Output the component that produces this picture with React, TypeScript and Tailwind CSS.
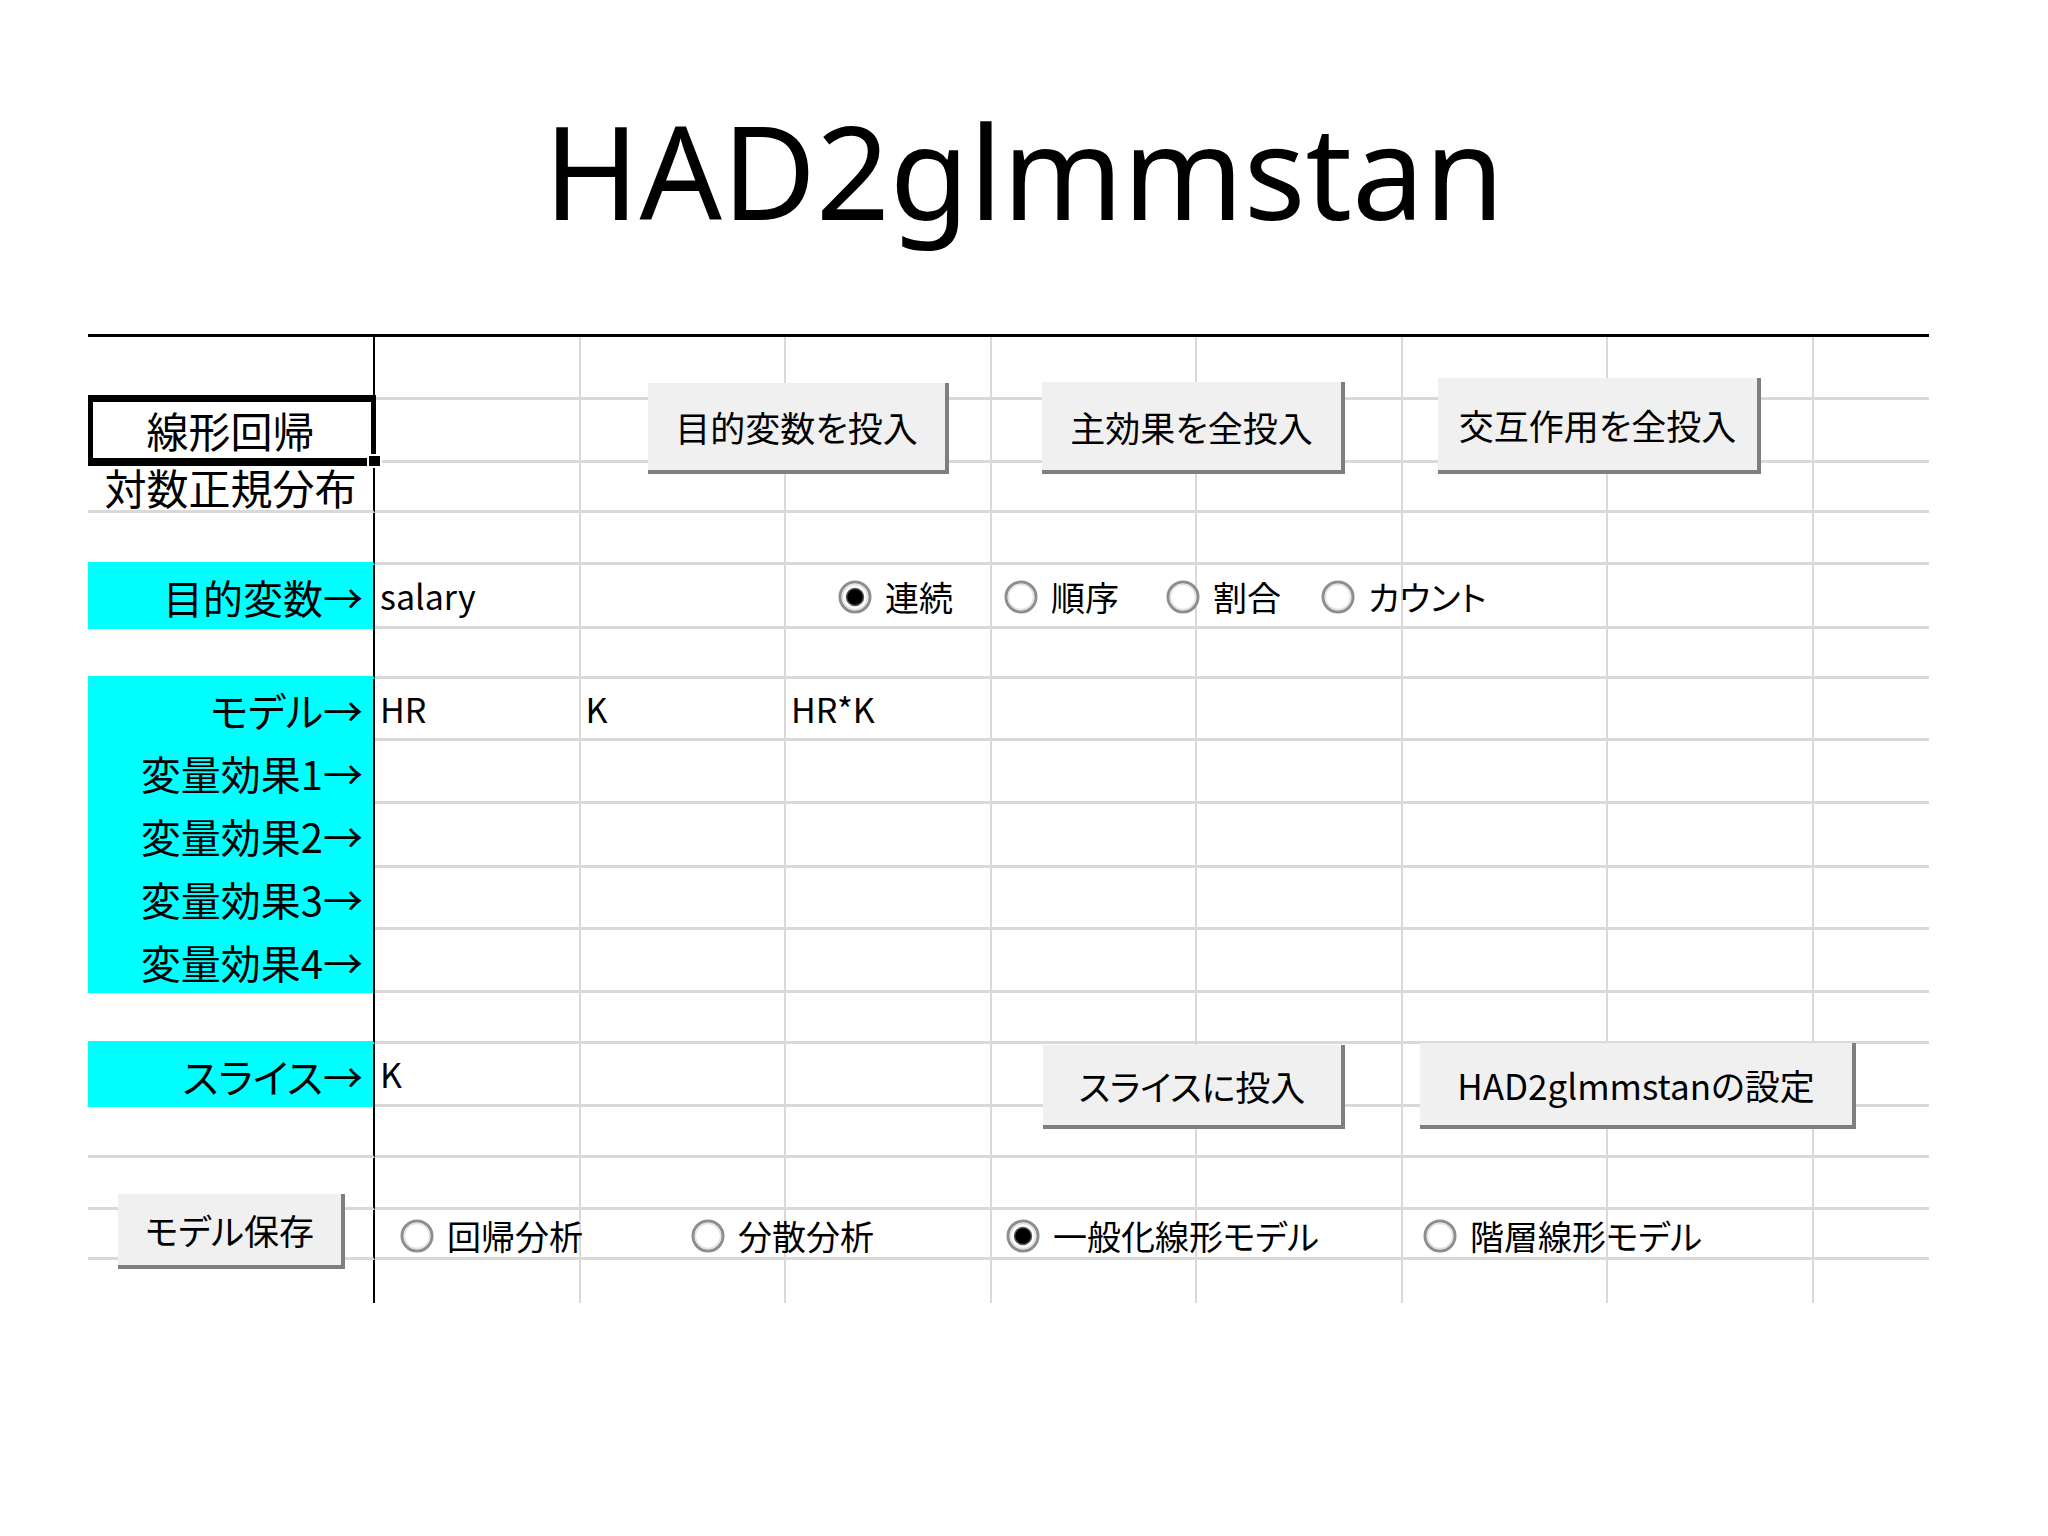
import React from "react";

const JP = "font-['Noto_Sans_CJK_JP',sans-serif] [font-feature-settings:'palt']";

type Label = { text?: string; cyan?: boolean; center?: boolean; bb: "gray" | "cyan" | "none" };

const labels: Label[] = [
  { bb: "gray" },
  { text: "線形回帰", center: true, bb: "gray" },
  { text: "対数正規分布", center: true, bb: "gray" },
  { bb: "cyan" },
  { text: "目的変数→", cyan: true, bb: "none" },
  { bb: "cyan" },
  { text: "モデル→", cyan: true, bb: "none" },
  { text: "変量効果1→", cyan: true, bb: "none" },
  { text: "変量効果2→", cyan: true, bb: "none" },
  { text: "変量効果3→", cyan: true, bb: "none" },
  { text: "変量効果4→", cyan: true, bb: "none" },
  { bb: "cyan" },
  { text: "スライス→", cyan: true, bb: "none" },
  { bb: "gray" },
  { bb: "gray" },
  { bb: "gray" },
  { bb: "none" },
];

const data: Record<string, string> = {
  "4-0": "salary",
  "6-0": "HR",
  "6-1": "K",
  "6-2": "HR*K",
  "12-0": "K",
};

function LabelCell({ l }: { l: Label }) {
  const cls = [
    "flex items-center border-r-2 border-r-black whitespace-nowrap text-black leading-none",
    JP,
    l.cyan ? "bg-[#00ffff]" : "bg-white",
    l.bb === "gray" ? "border-b-[3px] border-b-[#d9d9d9]" : "",
    l.bb === "cyan" ? "border-b-[3px] border-b-[#00ffff]" : "",
    l.center ? "justify-center text-[42px]" : "justify-end pr-[10px] text-[40px]",
  ].join(" ");
  return <div className={cls}>{l.text}</div>;
}

function DataCell({ row, col }: { row: number; col: number }) {
  const cls = [
    "flex items-center pl-[5px] text-[34px] leading-none whitespace-nowrap text-black",
    JP,
    col < 7 ? "border-r-2 border-r-[#d9d9d9]" : "",
    row < 16 ? "border-b-[3px] border-b-[#d9d9d9]" : "",
  ].join(" ");
  return <div className={cls}>{data[`${row}-${col}`] ?? ""}</div>;
}

function Btn({ className, children }: { className: string; children: React.ReactNode }) {
  return (
    <div
      className={`flex shrink-0 items-center justify-center bg-[#f0f0f0] border-r-4 border-b-4 border-r-[#7f7f7f] border-b-[#7f7f7f] text-[35px] leading-none whitespace-nowrap text-black ${JP} ${className}`}
    >
      {children}
    </div>
  );
}

function Radio({ className, label, checked }: { className: string; label: string; checked?: boolean }) {
  return (
    <div className={`flex shrink-0 items-center gap-[13px] ${className}`}>
      <svg width="34" height="34" viewBox="0 0 34 34" className="shrink-0">
        <circle cx="17" cy="17" r="15" fill="#ffffff" stroke="#8e8e8e" strokeWidth="3" />
        <circle cx="17" cy="17" r="12.5" fill="none" stroke="#e2e2e2" strokeWidth="1.5" />
        {checked && <circle cx="17" cy="17" r="8.5" fill="#000000" stroke="#555555" strokeWidth="1.5" />}
      </svg>
      <span className={`text-[34px] leading-none whitespace-nowrap text-black ${JP}`}>{label}</span>
    </div>
  );
}

export default function App() {
  return (
    <div className="w-[2048px] h-[1536px] bg-white overflow-hidden">
      <div className="h-[334px] pt-[106px]">
        <h1 className="text-center font-['Noto_Sans',sans-serif] text-[129px] leading-[129px] tracking-[0px] font-normal text-black">
          HAD2glmmstan
        </h1>
      </div>

      <div className="relative ml-[88px] w-[1841px] border-t-[3px] border-black">
        <div className="grid grid-cols-[287px_repeat(7,205.5px)_115.5px] grid-rows-[63px_63px_50px_52px_64px_50px_62px_63px_64px_62px_63px_51px_63px_51px_52px_50px_43px]">
          {labels.map((l, r) => (
            <React.Fragment key={r}>
              <LabelCell l={l} />
              {[0, 1, 2, 3, 4, 5, 6, 7].map((c) => (
                <DataCell key={c} row={r} col={c} />
              ))}
            </React.Fragment>
          ))}
        </div>

        {/* active-cell selection box and fill handle (overlay) */}
        <div className="absolute left-0 top-[58px] w-[288px] h-[71px] border-t-[7px] border-b-[8px] border-x-[5px] border-black pointer-events-none" />
        <div className="absolute left-[279px] top-[117px] w-[15px] h-[14px] bg-black border-2 border-white" />

        {/* floating form buttons, top row */}
        <div className="absolute left-[560px] top-[41px] flex items-end gap-[93px]">
          <Btn className="w-[301px] h-[91px]">目的変数を投入</Btn>
          <Btn className="w-[303px] h-[92px]">主効果を全投入</Btn>
          <Btn className="w-[323px] h-[96px]">交互作用を全投入</Btn>
        </div>

        {/* floating option buttons, response type */}
        <div className="absolute left-[750px] top-[243px] flex">
          <Radio className="w-[166px]" label="連続" checked />
          <Radio className="w-[162px]" label="順序" />
          <Radio className="w-[155px]" label="割合" />
          <Radio className="w-[180px]" label="カウント" />
        </div>

        {/* floating form buttons, slice row */}
        <div className="absolute left-[955px] top-[706px] flex items-end gap-[75px]">
          <Btn className="w-[302px] h-[84px]">スライスに投入</Btn>
          <Btn className="w-[436px] h-[86px]">HAD2glmmstanの設定</Btn>
        </div>

        {/* bottom row: save button and analysis type */}
        <div className="absolute left-[30px] top-[857px] flex items-center">
          <Btn className="w-[227px] h-[75px]">モデル保存</Btn>
          <div className="ml-[55px] mt-[9px] flex">
            <Radio className="w-[291px]" label="回帰分析" />
            <Radio className="w-[315px]" label="分散分析" />
            <Radio className="w-[417px]" label="一般化線形モデル" checked />
            <Radio className="w-[360px]" label="階層線形モデル" />
          </div>
        </div>
      </div>
    </div>
  );
}
